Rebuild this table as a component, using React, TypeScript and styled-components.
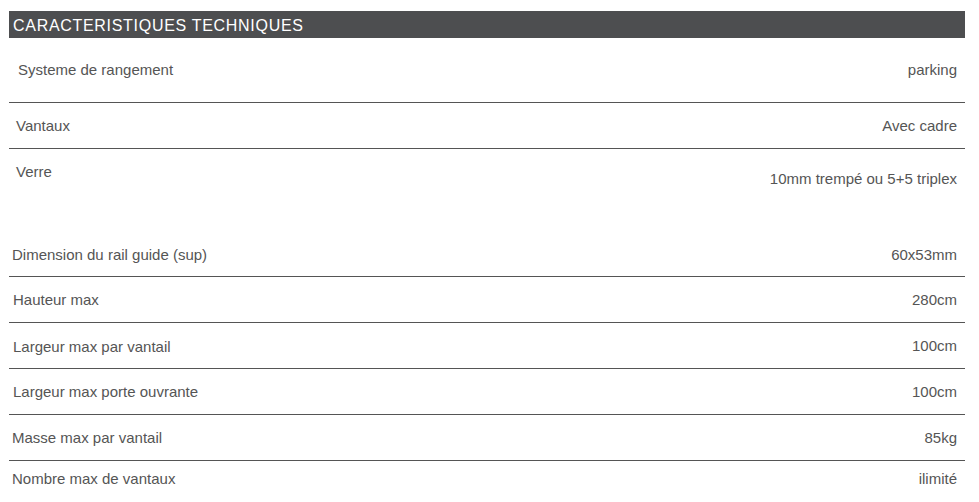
import styled, { createGlobalStyle } from "styled-components";

interface Spec {
  label: string;
  value: string;
  height: number;
  indent: number;
  labelTop: number;
  valueTop: number;
  divider: boolean;
}

const specs: Spec[] = [
  { label: "Systeme de rangement", value: "parking", height: 64, indent: 9, labelTop: 23, valueTop: 23, divider: true },
  { label: "Vantaux", value: "Avec cadre", height: 45, indent: 7, labelTop: 14, valueTop: 14, divider: true },
  { label: "Verre", value: "10mm trempé ou 5+5 triplex", height: 82, indent: 7, labelTop: 14, valueTop: 21, divider: false },
  { label: "Dimension du rail guide (sup)", value: "60x53mm", height: 45, indent: 3, labelTop: 15, valueTop: 15, divider: true },
  { label: "Hauteur max", value: "280cm", height: 45, indent: 4, labelTop: 14, valueTop: 14, divider: true },
  { label: "Largeur max par vantail", value: "100cm", height: 45, indent: 4, labelTop: 15, valueTop: 14, divider: true },
  { label: "Largeur max porte ouvrante", value: "100cm", height: 45, indent: 4, labelTop: 14, valueTop: 14, divider: true },
  { label: "Masse max par vantail", value: "85kg", height: 45, indent: 3, labelTop: 14, valueTop: 14, divider: true },
  { label: "Nombre max de vantaux", value: "ilimité", height: 41, indent: 3, labelTop: 9, valueTop: 9, divider: false },
];

const GlobalStyle = createGlobalStyle`
  html, body {
    margin: 0;
    padding: 0;
    background: #ffffff;
  }
  body {
    font-family: "Liberation Sans", Arial, sans-serif;
  }
`;

const Page = styled.div`
  padding: 11px 0 0 9px;
  width: 956px;
`;

const Header = styled.div`
  height: 27px;
  background: #4d4e50;
  color: #ffffff;
  font-size: 16px;
  letter-spacing: 0.7px;
  line-height: 27px;
  padding-left: 4px;
  padding-top: 1px;
  box-sizing: border-box;
  text-transform: uppercase;
`;

const Row = styled.div<{ $height: number; $divider: boolean }>`
  display: flex;
  justify-content: space-between;
  align-items: flex-start;
  height: ${(p) => p.$height}px;
  border-bottom: ${(p) => (p.$divider ? "1px solid #555555" : "none")};
  color: #555555;
  font-size: 15px;
  line-height: 17px;
`;

const Label = styled.span<{ $indent: number; $top: number }>`
  padding-left: ${(p) => p.$indent}px;
  padding-top: ${(p) => p.$top}px;
`;

const Value = styled.span<{ $top: number }>`
  padding-right: 8px;
  padding-top: ${(p) => p.$top}px;
`;

export default function App() {
  return (
    <>
      <GlobalStyle />
      <Page>
        <Header>Caracteristiques techniques</Header>
        {specs.map((s) => (
          <Row key={s.label} $height={s.height} $divider={s.divider}>
            <Label $indent={s.indent} $top={s.labelTop}>
              {s.label}
            </Label>
            <Value $top={s.valueTop}>{s.value}</Value>
          </Row>
        ))}
      </Page>
    </>
  );
}
